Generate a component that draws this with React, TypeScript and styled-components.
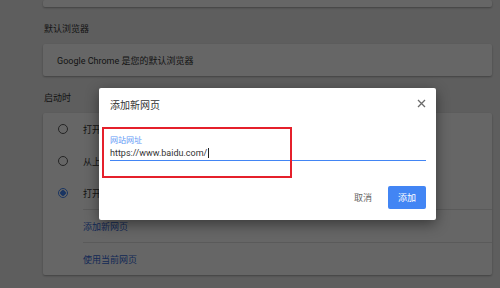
import styled, { createGlobalStyle } from "styled-components";

const GlobalStyle = createGlobalStyle`
  html, body {
    margin: 0;
    padding: 0;
  }
  body {
    width: 500px;
    height: 288px;
    overflow: hidden;
    background: #ebebeb;
    font-family: Roboto, "Noto Sans CJK SC", sans-serif;
  }
`;

const startupOptions = [
    { label: "打开新标签页", checked: false },
    { label: "从上次停下的地方继续", checked: false },
    { label: "打开特定网页或一组网页", checked: true },
];

const App = () => {
    return (
        <Stage>
            <GlobalStyle />
            <Settings>
                <StubCard />
                <SectionTitle>默认浏览器</SectionTitle>
                <Card>
                    <TextRow>Google Chrome 是您的默认浏览器</TextRow>
                </Card>
                <SectionTitle>启动时</SectionTitle>
                <Card>
                    {startupOptions.map((o) => (
                        <RadioRow key={o.label}>
                            <Radio checked={o.checked} />
                            <span>{o.label}</span>
                        </RadioRow>
                    ))}
                    <SubRow>添加新网页</SubRow>
                    <SubRow>使用当前网页</SubRow>
                </Card>
            </Settings>

            <Backdrop />

            <Dialog>
                <DialogHeader>
                    <DialogTitle>添加新网页</DialogTitle>
                    <CloseButton>
                        <svg width="9" height="9" viewBox="0 0 9 9">
                            <path d="M1 1 L8 8 M8 1 L1 8" stroke="#6b6b6b" strokeWidth="1.3" fill="none" />
                        </svg>
                    </CloseButton>
                </DialogHeader>
                <Field>
                    <FieldLabel>网站网址</FieldLabel>
                    <FieldInput>
                        https://www.baidu.com/<Caret />
                    </FieldInput>
                </Field>
                <DialogFooter>
                    <CancelButton>取消</CancelButton>
                    <AddButton>添加</AddButton>
                </DialogFooter>
                <Highlight />
            </Dialog>
        </Stage>
    );
};

const Stage = styled.div`
    position: relative;
    width: 500px;
    height: 288px;
    overflow: hidden;
`;

const Settings = styled.div`
    display: flex;
    flex-direction: column;
    width: 449px;
    margin-left: 43px;
`;

const Card = styled.div`
    display: flex;
    flex-direction: column;
    background: #ffffff;
    border-radius: 2px;
    box-shadow: 0 1px 2px rgba(0, 0, 0, 0.3);
`;

const StubCard = styled(Card)`
    height: 7px;
`;

const SectionTitle = styled.div`
    padding: 15px 1px 8px;
    font-size: 9px;
    line-height: 14px;
    color: #333;
`;

const TextRow = styled.div`
    display: flex;
    align-items: center;
    height: 32px;
    padding-left: 14px;
    font-size: 9px;
    color: #333;
`;

const RadioRow = styled.div`
    display: flex;
    align-items: center;
    gap: 15px;
    height: 32px;
    padding-left: 15px;
    font-size: 9px;
    color: #333;
`;

const Radio = styled.div<{ checked: boolean }>`
    box-sizing: border-box;
    width: 10px;
    height: 10px;
    border-radius: 50%;
    border: 1.5px solid ${(p) => (p.checked ? "#4285f4" : "#5a5a5a")};
    background: ${(p) => (p.checked ? "radial-gradient(circle, #4285f4 0 2.5px, #fff 3px)" : "#fff")};
`;

const SubRow = styled.div`
    display: flex;
    align-items: center;
    height: 32px;
    margin-left: 40px;
    border-top: 1px solid #e2e2e2;
    font-size: 9px;
    color: #3367d6;
`;

const Backdrop = styled.div`
    position: absolute;
    inset: 0;
    background: rgba(0, 0, 0, 0.6);
`;

const Dialog = styled.div`
    position: absolute;
    left: 99px;
    top: 88px;
    width: 337px;
    height: 132px;
    display: flex;
    flex-direction: column;
    background: #fff;
    border-radius: 2px;
    box-shadow: 0 4px 14px rgba(0, 0, 0, 0.45);
`;

const DialogHeader = styled.div`
    display: flex;
    align-items: center;
    justify-content: space-between;
    height: 32px;
    padding: 0 10px 0 11px;
`;

const DialogTitle = styled.div`
    font-size: 10px;
    color: #333;
`;

const CloseButton = styled.div`
    display: flex;
    width: 9px;
    height: 9px;
    margin-top: -1px;
`;

const Field = styled.div`
    display: flex;
    flex-direction: column;
    margin: 15px 10px 0 11px;
`;

const FieldLabel = styled.div`
    font-size: 8px;
    line-height: 11px;
    color: #5e97f6;
`;

const FieldInput = styled.div`
    display: flex;
    align-items: center;
    height: 14px;
    font-size: 9px;
    line-height: 11px;
    color: #333;
    border-bottom: 1px solid #4285f4;
`;

const Caret = styled.span`
    display: inline-block;
    width: 1px;
    height: 10px;
    margin-left: 1px;
    background: #222;
`;

const DialogFooter = styled.div`
    display: flex;
    align-items: center;
    justify-content: flex-end;
    gap: 16px;
    margin-top: 25px;
    padding-right: 10px;
`;

const CancelButton = styled.div`
    font-size: 9px;
    color: #666;
`;

const AddButton = styled.div`
    display: flex;
    align-items: center;
    justify-content: center;
    width: 38px;
    height: 23px;
    border-radius: 2px;
    background: #4285f4;
    font-size: 9px;
    color: #fff;
`;

const Highlight = styled.div`
    position: absolute;
    left: 3px;
    top: 39px;
    width: 190px;
    height: 51px;
    box-sizing: border-box;
    border: 2px solid #e5202b;
`;

export default App;
